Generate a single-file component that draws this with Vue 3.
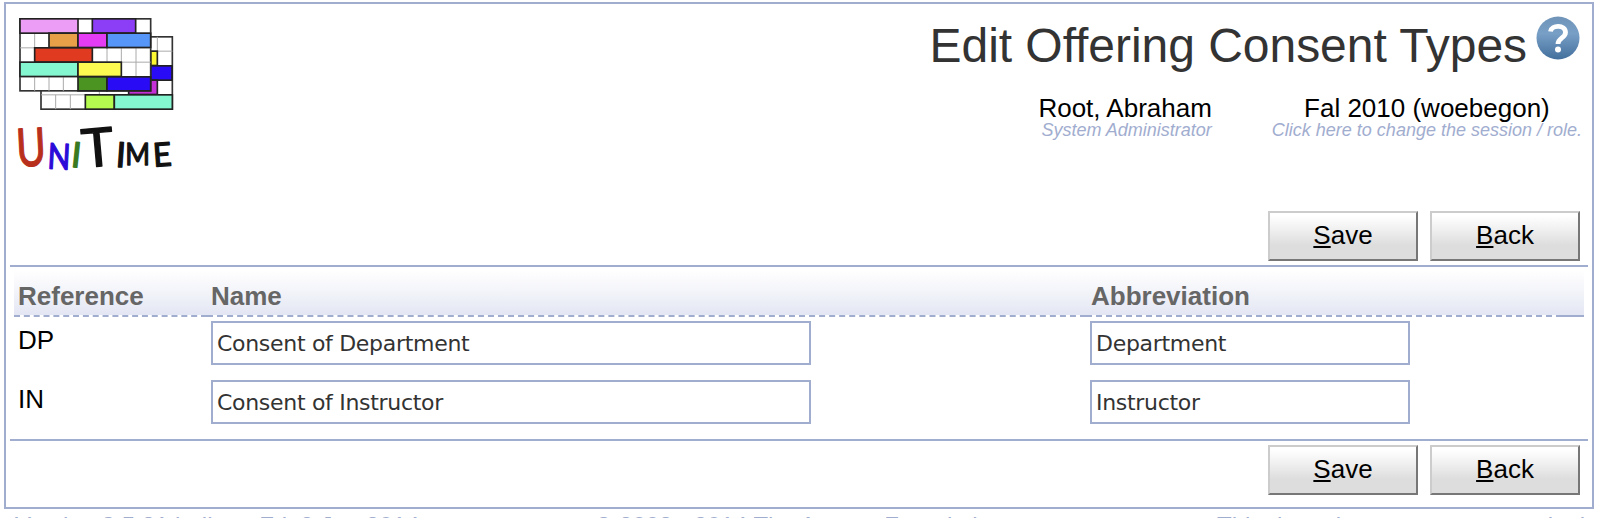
<script setup>
import { ref } from 'vue'

const rows = ref([
  { reference: 'DP', name: 'Consent of Department', abbreviation: 'Department' },
  { reference: 'IN', name: 'Consent of Instructor', abbreviation: 'Instructor' }
])

const actions = [
  { key: 'S', rest: 'ave' },
  { key: 'B', rest: 'ack' }
]

// Timetable blocks of the logo: x, y, width, height, fill
const backBlocks = [
  [452, 153, 20, 43, '#fbf832'],
  [452, 197, 64, 43, '#2a0bf5'],
  [386, 240, 86, 43, '#c42fd6'],
  [256, 284, 87, 43, '#b5fb4f'],
  [343, 284, 174, 43, '#84f7d0']
]
const frontBlocks = [
  [60, 56, 174, 43, '#ec9df6'],
  [277, 56, 130, 43, '#8c3df6'],
  [147, 99, 87, 43, '#e8a048'],
  [234, 99, 87, 43, '#e43cf5'],
  [321, 99, 131, 43, '#5596f8'],
  [104, 143, 173, 43, '#e03a20'],
  [60, 186, 174, 43, '#84f7d0'],
  [234, 186, 130, 43, '#fdfb52'],
  [234, 230, 87, 42, '#4b9422'],
  [321, 230, 131, 42, '#2a0bf5']
]
</script>

<template>
  <div class="page">
    <main class="frame">
      <header class="header">
        <svg class="logo" viewBox="54 48 468 470" role="img" aria-label="UniTime">
          <rect x="123" y="110" width="394" height="217" fill="#fff" stroke="#333" stroke-width="5" />
          <path d="M472 110V284M452 153H517M472 240H517M167 284V327M211 284V327M123 284H256M298 272V284" class="grid" />
          <rect v-for="(b, i) in backBlocks" :key="'b' + i" :x="b[0]" :y="b[1]" :width="b[2]" :height="b[3]" :fill="b[4]" stroke="#222" stroke-width="5" />
          <rect x="60" y="56" width="392" height="216" fill="#fff" stroke="#333" stroke-width="5" />
          <path d="M60 99H452M60 143H452M60 186H452M60 230H452M104 99V143M321 143V186M364 143V230M408 143V230M104 230V272M147 230V272M190 230V272" class="grid" />
          <rect v-for="(b, i) in frontBlocks" :key="'f' + i" :x="b[0]" :y="b[1]" :width="b[2]" :height="b[3]" :fill="b[4]" stroke="#222" stroke-width="5" />
          <g class="wordmark">
            <text transform="translate(52 500) rotate(-3) scale(.76 1)" font-size="158" fill="#b8301c" stroke="#b8301c">U</text>
            <text transform="translate(141 505) rotate(3) scale(.84 1)" font-size="107" fill="#2a0bd8" stroke="#2a0bd8">N</text>
            <text transform="translate(211 500) rotate(6)" font-size="105" fill="#397a20" stroke="#397a20">I</text>
            <text transform="translate(250 503) rotate(-5) scale(1.02 1)" font-size="160">T</text>
            <text transform="translate(346 500) rotate(4)" font-size="104">I</text>
            <text transform="translate(376 494) scale(.85 1)" font-size="94">M</text>
            <text transform="translate(461 500) rotate(-4) scale(.98 1)" font-size="98">E</text>
          </g>
        </svg>
        <div class="heading">
          <div class="title-line">
            <h1>Edit Offering Consent Types</h1>
            <svg class="help" viewBox="0 0 44 44" aria-label="Help">
              <defs>
                <linearGradient id="helpFill" x1="0" y1="0" x2="0" y2="1">
                  <stop offset="0" stop-color="#7094b8" />
                  <stop offset=".4" stop-color="#789fc6" />
                  <stop offset="1" stop-color="#426f9c" />
                </linearGradient>
              </defs>
              <circle cx="22" cy="22" r="21.5" fill="url(#helpFill)" />
              <path d="M14.5 15.5C15.5 8.5 29.5 8.5 29.5 16.5C29.5 22 22 22 22 28" fill="none" stroke="#fff" stroke-width="4.8" />
              <circle cx="22" cy="33.5" r="3" fill="#fff" />
            </svg>
          </div>
          <div class="session">
            <div class="info user">
              <span>Root, Abraham</span>
              <em>System Administrator</em>
            </div>
            <div class="info term">
              <span>Fal 2010 (woebegon)</span>
              <em>Click here to change the session / role.</em>
            </div>
          </div>
        </div>
      </header>

      <div class="actions top">
        <button v-for="a in actions" :key="a.key" type="button"><u>{{ a.key }}</u>{{ a.rest }}</button>
      </div>

      <section class="table">
        <div class="row head">
          <div>Reference</div>
          <div>Name</div>
          <div class="abbv-head">Abbreviation</div>
          <div></div>
        </div>
        <div v-for="row in rows" :key="row.reference" class="row body">
          <div>{{ row.reference }}</div>
          <div><input v-model="row.name" class="name" type="text"></div>
          <div><input v-model="row.abbreviation" class="abbv" type="text"></div>
        </div>
      </section>

      <div class="actions bottom">
        <button v-for="a in actions" :key="a.key" type="button"><u>{{ a.key }}</u>{{ a.rest }}</button>
      </div>
    </main>

    <footer class="footer">
      <span>Version 3.5.81 built on Fri, 9 Jan 2014</span>
      <span>© 2008 - 2014 The Apereo Foundation</span>
      <span class="notice">This demo is now reset every single day.</span>
    </footer>
  </div>
</template>

<style>
body {
  background: #fff;
}
</style>

<style scoped>
.page {
  box-sizing: border-box;
  height: 518px;
  padding: 2px 8px 0 4px;
  overflow: hidden;
  font-family: "Liberation Sans", Arial, sans-serif;
  font-size: 26px;
  color: #000;
}

.frame {
  box-sizing: border-box;
  height: 507px;
  border: 2px solid #a1adcf;
  padding: 0 4px;
}

.header {
  display: flex;
  justify-content: space-between;
  box-sizing: border-box;
  height: 207px;
  padding: 12px 6px 0 8px;
}

.logo {
  width: 156px;
  height: 157px;
  overflow: visible;
}

.grid {
  fill: none;
  stroke: #aaa;
  stroke-width: 3;
}

.wordmark {
  font-family: Lato, sans-serif;
  fill: #111;
  stroke: #111;
  stroke-width: 4;
  stroke-linejoin: round;
}

.heading {
  display: flex;
  flex-direction: column;
  align-items: flex-end;
}

.title-line {
  display: flex;
  padding-right: 2px;
}

h1 {
  margin: 2px 9px 0 0;
  font-size: 48px;
  font-weight: normal;
  line-height: 56px;
  letter-spacing: -0.04px;
  color: #333;
  white-space: nowrap;
}

.help {
  width: 44px;
  height: 44px;
}

.session {
  display: flex;
  gap: 60px;
  margin-top: 21px;
}

.info {
  display: flex;
  flex-direction: column;
  white-space: nowrap;
}

.info span {
  line-height: 26px;
}

.user {
  align-items: flex-end;
}

.term {
  align-items: center;
}

em {
  margin-top: -1px;
  font-size: 18px;
  line-height: 20px;
  color: #a1adcf;
}

.actions {
  display: flex;
  justify-content: flex-end;
  gap: 12px;
  padding-right: 8px;
}

.top {
  height: 54px;
}

.bottom {
  padding-top: 4px;
}

button {
  box-sizing: border-box;
  width: 150px;
  height: 50px;
  padding: 0 0 2px;
  border: 2px solid;
  border-color: #ccc #777 #777 #ccc;
  border-radius: 0;
  background: linear-gradient(#fff 5%, #f3f3f3 30%, #ddd 70%, #ddd);
  font: 26px "Liberation Sans", Arial, sans-serif;
  color: #000;
}

u {
  text-decoration-thickness: 2px;
  text-underline-offset: 2px;
}

.table {
  box-sizing: border-box;
  height: 176px;
  padding: 3px 4px 0;
  border-top: 2px solid #a1adcf;
  border-bottom: 2px solid #a1adcf;
}

.row {
  display: grid;
  grid-template-columns: 193px 879px 476px 22px;
}

.head {
  height: 47px;
  background: linear-gradient(#fff, #f4f5fa 45%, #e3e6f3) 0 0 / 100% 45px no-repeat;
  font-weight: bold;
  color: #666;
}

.head div {
  box-sizing: border-box;
  padding: 11px 4px 0;
  line-height: 30px;
  border-bottom: 2px dashed #a1adcf;
}

.head .abbv-head {
  padding-left: 5px;
}

.head div:last-child {
  border-bottom-style: solid;
}

.body {
  height: 59px;
}

.body > div {
  padding: 4px 4px 0;
}

.body > div:first-child {
  padding-top: 8px;
  line-height: 30px;
}

input {
  box-sizing: border-box;
  display: block;
  height: 44px;
  margin: 0;
  padding: 0 4px;
  border: 2px solid #a1adcf;
  border-radius: 0;
  background: #fff;
  font: 22px Verdana, "DejaVu Sans", sans-serif;
  letter-spacing: -0.3px;
  color: #333;
}

.name {
  width: 600px;
}

.abbv {
  width: 320px;
}

.footer {
  display: grid;
  grid-template-columns: 1fr auto 1fr;
  padding: 3px 10px 0 11px;
  font-size: 24px;
  line-height: 28px;
  color: #a1adcf;
  white-space: nowrap;
}

.notice {
  justify-self: end;
  width: 367px;
}
</style>
